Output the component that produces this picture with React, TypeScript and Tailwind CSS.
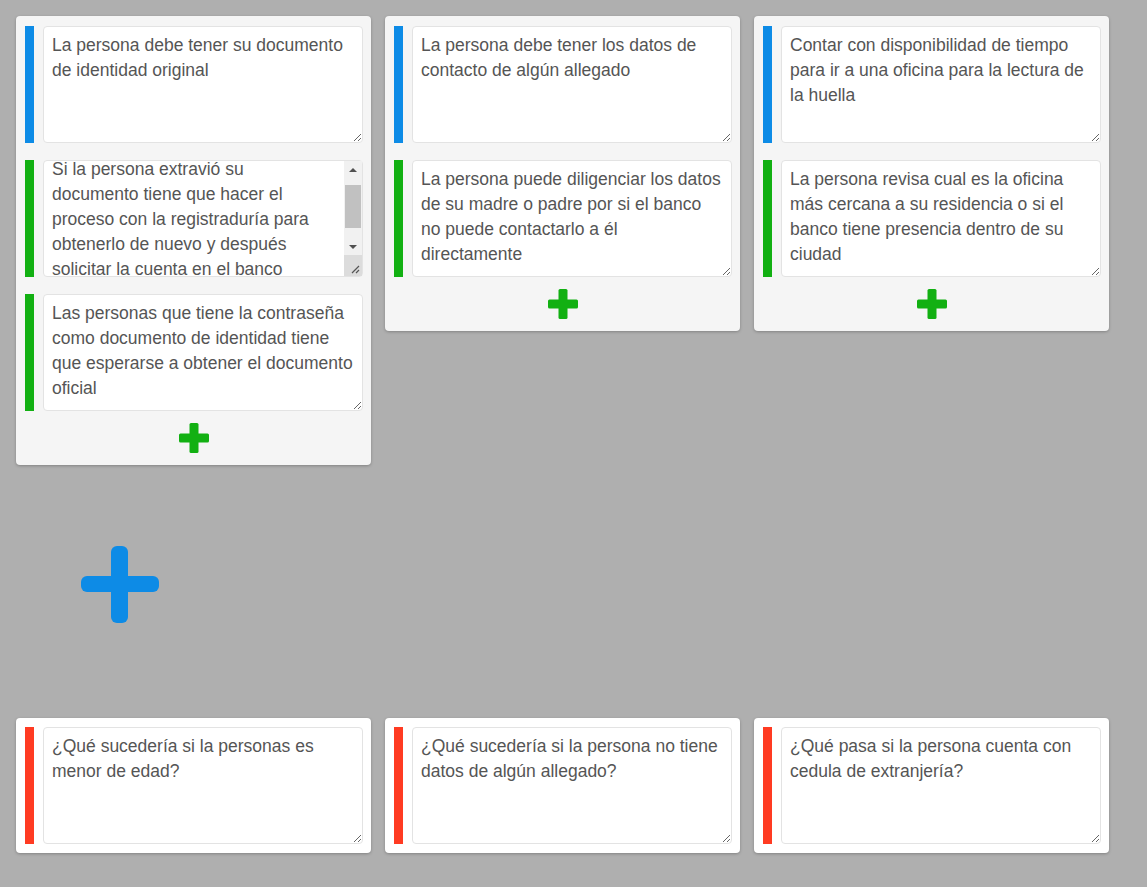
import React, { useEffect, useRef } from 'react';

type Note = { text: string; scrollTo?: number };

const columns: { blue: Note[]; green: Note[] }[] = [
  {
    blue: [{ text: 'La persona debe tener su documento de identidad original' }],
    green: [
      {
        text: 'Si la persona extravió su documento tiene que hacer el proceso con la registraduría para obtenerlo de nuevo y después solicitar la cuenta en el banco',
        scrollTo: 10,
      },
      { text: 'Las personas que tiene la contraseña como documento de identidad tiene que esperarse a obtener el documento oficial' },
    ],
  },
  {
    blue: [{ text: 'La persona debe tener los datos de contacto de algún allegado' }],
    green: [{ text: 'La persona puede diligenciar los datos de su madre o padre por si el banco no puede contactarlo a él directamente' }],
  },
  {
    blue: [{ text: 'Contar con disponibilidad de tiempo para ir a una oficina para la lectura de la huella' }],
    green: [{ text: 'La persona revisa cual es la oficina más cercana a su residencia o si el banco tiene presencia dentro de su ciudad' }],
  },
];

const questions = [
  '¿Qué sucedería si la personas es menor de edad?',
  '¿Qué sucedería si la persona no tiene datos de algún allegado?',
  '¿Qué pasa si la persona cuenta con cedula de extranjería?',
];

// classic scrollbar look, drawn over the textarea
function FakeScrollbar() {
  return (
    <div className="pointer-events-none absolute top-px right-px bottom-px flex w-[18px] flex-col bg-[#f1f1f1]">
      <div className="flex h-[17px] items-center justify-center">
        <div className="h-0 w-0 border-x-[4px] border-b-[4px] border-x-transparent border-b-[#505050]" />
      </div>
      <div className="h-[60px] px-px pt-[7px]">
        <div className="h-[43px] bg-[#c1c1c1]" />
      </div>
      <div className="flex h-[17px] items-center justify-center">
        <div className="h-0 w-0 border-x-[4px] border-t-[4px] border-x-transparent border-t-[#505050]" />
      </div>
      <div className="flex flex-1 items-end justify-end bg-[#dcdcdc] p-[2px]">
        <svg width="9" height="9" viewBox="0 0 9 9">
          <path d="M1 8 L8 1 M5 8 L8 5" stroke="#555" strokeWidth="1.2" />
        </svg>
      </div>
    </div>
  );
}

function NoteRow({ note, color }: { note: Note; color: string }) {
  const ref = useRef<HTMLTextAreaElement>(null);

  useEffect(() => {
    if (ref.current && note.scrollTo) ref.current.scrollTop = note.scrollTo;
  }, [note.scrollTo]);

  return (
    <div className="flex gap-[9px]">
      <div className={`w-[9px] shrink-0 ${color}`} />
      <div className="relative h-[117px] w-[320px]">
        <textarea
          ref={ref}
          defaultValue={note.text}
          className={`h-full w-full rounded border border-[#e3e3e3] bg-white py-[6px] pl-2 text-[17.5px] leading-[25px] text-[#555] outline-none ${
            note.scrollTo ? 'resize-none overflow-hidden pr-[30px]' : 'pr-2'
          }`}
          style={{ fontFamily: '"Liberation Sans", Arial, sans-serif' }}
        />
        {note.scrollTo ? <FakeScrollbar /> : null}
      </div>
    </div>
  );
}

function GreenPlus() {
  return (
    <button className="flex h-[54px] items-center justify-center">
      <svg width="32" height="32" viewBox="0 0 32 32">
        <rect x="11.5" y="1" width="9" height="30" rx="1.5" fill="#12b012" />
        <rect x="1" y="11.5" width="30" height="9" rx="1.5" fill="#12b012" />
      </svg>
    </button>
  );
}

export default function App() {
  return (
    <div className="min-h-screen bg-[#afafaf] p-4" style={{ fontFamily: '"Liberation Sans", Arial, sans-serif' }}>
      {/* Row of idea cards */}
      <div className="flex items-start gap-[14px]">
        {columns.map((col, i) => (
          <div key={i} className="flex w-[355px] flex-col rounded bg-[#f5f5f5] pl-[9px] pr-2 pt-[10px] shadow-[0_1px_3px_rgba(0,0,0,0.25)]">
            <div className="flex flex-col gap-[17px]">
              {col.blue.map((n, j) => (
                <NoteRow key={'b' + j} note={n} color="bg-[#0d8be6]" />
              ))}
              {col.green.map((n, j) => (
                <NoteRow key={'g' + j} note={n} color="bg-[#12b012]" />
              ))}
            </div>
            <GreenPlus />
          </div>
        ))}
      </div>

      {/* Add column */}
      <div className="mt-[80px] mb-[93px] flex pl-16">
        <button>
          <svg width="80" height="80" viewBox="0 0 80 80">
            <rect x="31" y="1" width="17" height="77" rx="6" fill="#0d8be6" />
            <rect x="1" y="31" width="78" height="16" rx="6" fill="#0d8be6" />
          </svg>
        </button>
      </div>

      {/* Questions row */}
      <div className="flex items-start gap-[14px]">
        {questions.map((q, i) => (
          <div key={i} className="flex w-[355px] rounded bg-white py-[9px] pl-[9px] pr-2 shadow-[0_1px_3px_rgba(0,0,0,0.25)]">
            <NoteRow note={{ text: q }} color="bg-[#ff3b22]" />
          </div>
        ))}
      </div>
    </div>
  );
}
